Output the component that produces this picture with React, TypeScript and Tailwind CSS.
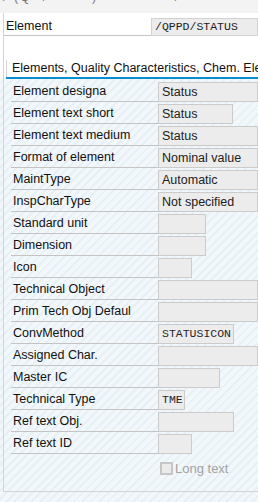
import React from 'react';

type Row = {
  label: string;
  value?: string;
  width?: string;
  mono?: boolean;
};

const rows: Row[] = [
  { label: 'Element designa', value: 'Status', width: 'flex-1' },
  { label: 'Element text short', value: 'Status', width: 'w-[75px]' },
  { label: 'Element text medium', value: 'Status', width: 'flex-1' },
  { label: 'Format of element', value: 'Nominal value', width: 'flex-1' },
  { label: 'MaintType', value: 'Automatic', width: 'flex-1' },
  { label: 'InspCharType', value: 'Not specified', width: 'flex-1' },
  { label: 'Standard unit', width: 'w-[48px]' },
  { label: 'Dimension', width: 'w-[48px]' },
  { label: 'Icon', width: 'w-[34px]' },
  { label: 'Technical Object', width: 'flex-1' },
  { label: 'Prim Tech Obj Defaul', width: 'flex-1' },
  { label: 'ConvMethod', value: 'STATUSICON', width: 'w-[76px]', mono: true },
  { label: 'Assigned Char.', width: 'flex-1' },
  { label: 'Master IC', width: 'w-[62px]' },
  { label: 'Technical Type', value: 'TME', width: 'w-[27px]', mono: true },
  { label: 'Ref text Obj.', width: 'w-[76px]' },
  { label: 'Ref text ID', width: 'w-[34px]' },
];

const FieldRow: React.FC<{ row: Row }> = ({ row }) => (
  <div className="flex h-[22px] items-end">
    <div className="w-[147px] h-full shrink-0 border-b border-[#c4c4c4] flex items-center pl-[2px] pt-[1px] text-[#111] whitespace-nowrap overflow-hidden">
      {row.label}
    </div>
    <div
      className={`${row.width} h-[20px] bg-[#ececec] border border-[#cbcbcb] flex items-center pl-[3px] whitespace-nowrap overflow-hidden ${
        row.mono ? "font-['Liberation_Mono',monospace] text-[11.5px] text-[#2a1f2a]" : 'text-[#222]'
      }`}
    >
      {row.value}
    </div>
  </div>
);

const App: React.FC = () => {
  return (
    <div className="w-[258px] h-[502px] overflow-hidden font-['Liberation_Sans',Arial,sans-serif] text-[12.5px] leading-none bg-[repeating-linear-gradient(135deg,#f1f7fa_0px,#f1f7fa_4px,#e7f0f5_4px,#e7f0f5_6px)]">
      {/* cut-off line at the very top */}
      <div className="h-[13px] bg-[#f3f3f3] overflow-hidden">
        <div className="-mt-[9px] pl-[3px] text-[#777] whitespace-nowrap tracking-[2px]">/ (Q&nbsp;&nbsp;/&nbsp;&nbsp;&nbsp;&nbsp;&nbsp;&nbsp;&nbsp;&nbsp;)&nbsp;&nbsp;&nbsp;&nbsp;&nbsp;&nbsp;&nbsp;&nbsp;&nbsp;&nbsp;&nbsp;&nbsp;&nbsp;&nbsp;/</div>
      </div>

      <div className="bg-white">
        <div className="ml-[3px] border-l border-[#d4d4d4] pt-[5px]">
          <div className="flex h-[18px]">
            <div className="w-[147px] shrink-0 border-b border-[#c4c4c4] flex items-center pl-[2px] text-[#111]">
              Element
            </div>
            <div className="flex-1 bg-[#ececec] border border-[#d2d2d2] flex items-center pl-[3px] font-['Liberation_Mono',monospace] text-[11.5px] text-[#1f1f1f]">
              /QPPD/STATUS
            </div>
          </div>

          <div className="mt-[24px] ml-[2px] border-b-2 border-[#0a8fd6]">
            <div className="h-[17px] border-l border-[#d4d4d4] flex items-center pl-[5px] whitespace-nowrap overflow-hidden text-[#111]">
              Elements, Quality Characteristics, Chem. Elements
            </div>
          </div>
        </div>
      </div>

      <div className="ml-[3px] h-[413px] border-l border-b border-[#d4d4d4] pl-[7px] pt-[1px]">
        {rows.map((row) => (
          <FieldRow key={row.label} row={row} />
        ))}
        <div className="mt-[8px] ml-[149px] flex items-center gap-[2px] text-[13px] text-[#a3a3a3]">
          <span className="w-[13px] h-[13px] border-2 border-[#c6c6c6] bg-[#ebebeb]" />
          <span>Long text</span>
        </div>
      </div>
    </div>
  );
};

export default App;
